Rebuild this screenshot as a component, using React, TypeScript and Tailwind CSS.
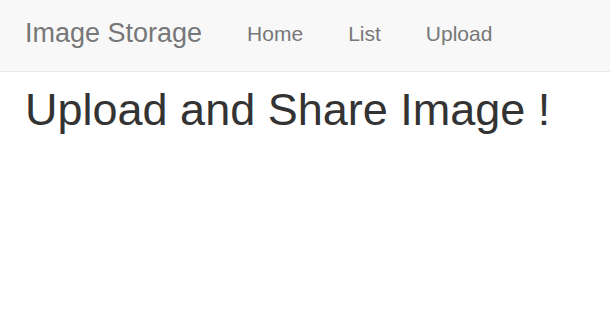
export default function App() {
  return (
    <div className="min-h-screen bg-white font-['Liberation_Sans',Arial,sans-serif]">
      <nav className="h-[72px] bg-[#f8f8f8] border-b border-[#e7e7e7] flex items-center gap-[45px] px-[25px] pb-[4px]">
        <a className="text-[27px] leading-none text-[#777]">Image Storage</a>
        <a className="text-[21px] leading-none text-[#777]">Home</a>
        <a className="text-[21px] leading-none text-[#777]">List</a>
        <a className="text-[21px] leading-none text-[#777]">Upload</a>
      </nav>
      <div className="px-[25px]">
        <h1 className="mt-[15px] text-[45px] leading-none text-[#333]">Upload and Share Image !</h1>
      </div>
    </div>
  );
}
